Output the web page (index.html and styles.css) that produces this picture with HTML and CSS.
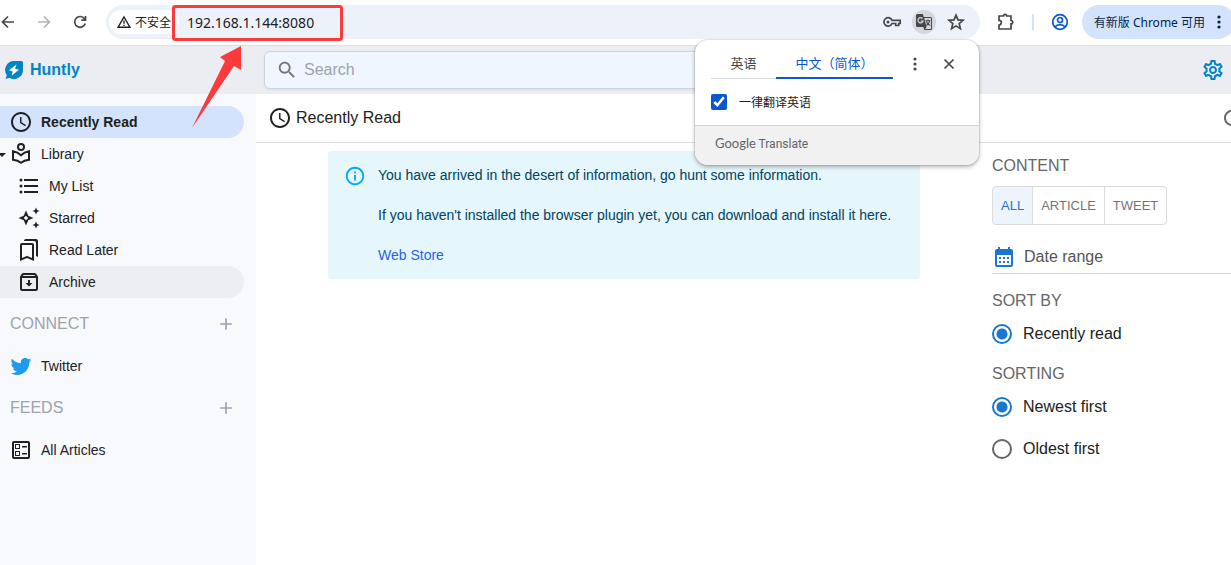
FILE: index.html
```html
<!DOCTYPE html>
<html lang="en">
<head>
    <meta charset="UTF-8">
    <meta name="viewport" content="width=device-width, initial-scale=1.0">
    <title>Huntly</title>
    <link rel="stylesheet" href="styles.css">
</head>
<body>
    <!-- Browser toolbar -->
    <div class="toolbar">
        <div class="nav-buttons">
            <button class="tool" aria-label="Back">
                <svg width="16" height="16" viewBox="0 0 16 16" class="line"><path d="M14 8H3M8 2.500L2.500 8 8 13.500"/></svg>
            </button>
            <button class="tool dim" aria-label="Forward">
                <svg width="16" height="16" viewBox="0 0 16 16" class="line"><path d="M2 8h11M8 2.500L13.500 8 8 13.500"/></svg>
            </button>
            <button class="tool" aria-label="Reload">
                <svg width="16" height="16" viewBox="0 0 16 16" class="line"><path d="M13.300 9.500A5.400 5.400 0 1 1 12.500 4.700L13.500 6M13.500 2v4.200H9.300"/></svg>
            </button>
        </div>
        <div class="omnibox">
            <button class="security">
                <svg width="14" height="14" viewBox="0 0 14 14" class="line thin"><path d="M7 2L13 12.300H1zM7 5.500v3.200M7 9.700v1.300"/></svg>
                <span>不安全</span>
            </button>
            <input class="url" type="text" value="192.168.1.144:8080" aria-label="Address">
            <button class="tool" aria-label="Passwords">
                <svg width="20" height="20" viewBox="0 0 20 20" class="line"><path d="M10 8.300h8.200v3.200h-1.500v2h-3v-2H10a4.200 4.200 0 1 1 0-3.200z"/><circle cx="6" cy="10" r="1.500" fill="currentColor" stroke="none"/></svg>
            </button>
            <button class="tool round" aria-label="Translate">
                <svg width="18" height="18" viewBox="0 0 18 18"><path fill="currentColor" d="M2.500 1h5.300l1 3H15.500A1.500 1.500 0 0 1 17 5.500v10A1.500 1.500 0 0 1 15.500 17H9.300l-1-3H2.500A1.500 1.500 0 0 1 1 12.500v-10A1.500 1.500 0 0 1 2.500 1z"/><path fill="#d4d7dd" d="M9.200 5h6.300l.5.500v10l-.5.500h-5.400l1.500-2z"/><path fill="none" stroke="#d4d7dd" stroke-width="1.200" d="M7.500 5.500A2.600 2.600 0 1 0 8.100 8H5.600"/><path fill="none" stroke="#474747" stroke-width="1.100" d="M10.500 7.800h5M13 6.500v1.300M14.700 7.800c-.5 2.200-1.600 3.600-3.400 4.700M11.400 8.500c.6 1.700 1.700 3 3.600 4"/></svg>
            </button>
            <button class="tool" aria-label="Bookmark this tab">
                <svg width="18" height="18" viewBox="0 0 18 18" class="line"><path d="M9 2.200l2 4.700 5.100.4-3.900 3.300 1.200 5L9 12.900l-4.400 2.700 1.200-5-3.900-3.300 5.100-.4z"/></svg>
            </button>
        </div>
        <div class="browser-actions">
            <button class="tool" aria-label="Extensions">
                <svg width="18" height="18" viewBox="0 0 18 18" class="line"><path d="M2 3h4.500a1.600 1.600 0 0 1 3.200 0H14v4.500a1.700 1.700 0 0 1 0 3.400V16H2v-4a2.300 2.300 0 0 0 0-4.600z"/></svg>
            </button>
            <span class="divider"></span>
            <button class="tool profile" aria-label="Profile">
                <svg width="18" height="18" viewBox="0 0 18 18" class="line"><circle cx="9" cy="9" r="7.300"/><circle cx="9" cy="7" r="2.500"/><path d="M3.800 14c2.800-3.200 7.600-3.200 10.400 0"/></svg>
            </button>
            <button class="update">
                <span>有新版 Chrome 可用</span>
                <svg width="4" height="16" viewBox="0 0 4 16" fill="currentColor"><circle cx="2" cy="3" r="1.600"/><circle cx="2" cy="8" r="1.600"/><circle cx="2" cy="13" r="1.600"/></svg>
            </button>
        </div>
    </div>

    <!-- App header -->
    <header class="header">
        <a class="brand" href="#">
            <svg width="20" height="20" viewBox="0 0 20 20"><path fill="#0284c7" d="M10 1h7.500A1.500 1.500 0 0 1 19 2.500V10a9 9 0 0 1-13.600 7.800L1.500 19l1.300-3.800A9 9 0 0 1 10 1z"/><path fill="#fff" d="M12.500 4.500L5 10.300l3.800 1.200-1.300 4.200 7.500-5.900-4-1.100z"/></svg>
            <span>Huntly</span>
        </a>
        <label class="search">
            <svg width="22" height="22" viewBox="0 0 24 24" fill="currentColor"><path d="M15.500 14h-.79l-.28-.27C15.410 12.590 16 11.110 16 9.500 16 5.910 13.090 3 9.500 3S3 5.910 3 9.500 5.910 16 9.500 16c1.610 0 3.090-.59 4.230-1.570l.27.28v.79l5 4.990L20.490 19l-4.990-5zm-6 0C7.010 14 5 11.990 5 9.500S7.010 5 9.500 5 14 7.010 14 9.500 11.990 14 9.500 14z"/></svg>
            <input type="text" placeholder="Search" aria-label="Search">
        </label>
        <button class="settings" aria-label="Settings">
            <svg width="24" height="24" viewBox="0 0 24 24" fill="currentColor"><path d="M19.430 12.980c.04-.32.07-.64.07-.98 0-.34-.03-.66-.07-.98l2.110-1.650c.19-.15.24-.42.12-.64l-2-3.460c-.09-.16-.26-.25-.44-.25-.06 0-.12.010-.17.030l-2.490 1c-.52-.4-1.080-.73-1.690-.98l-.38-2.650C14.460 2.180 14.250 2 14 2h-4c-.25 0-.46.18-.49.42l-.38 2.650c-.61.25-1.170.59-1.690.98l-2.490-1c-.06-.02-.12-.03-.18-.03-.17 0-.34.09-.43.25l-2 3.460c-.13.22-.07.49.12.64l2.110 1.650c-.04.32-.07.65-.07.98 0 .33.03.66.07.98l-2.110 1.650c-.19.15-.24.42-.12.64l2 3.460c.09.16.26.25.44.25.06 0 .12-.01.17-.03l2.490-1c.52.4 1.080.73 1.690.98l.38 2.650c.03.24.24.42.49.42h4c.25 0 .46-.18.49-.42l.38-2.650c.61-.25 1.170-.59 1.690-.98l2.490 1c.06.02.12.03.18.03.17 0 .34-.09.43-.25l2-3.460c.12-.22.07-.49-.12-.64l-2.110-1.650zm-1.980-1.710c.04.31.05.52.05.73 0 .21-.02.43-.05.73l-.14 1.130.89.7 1.080.84-.7 1.210-1.270-.51-1.040-.42-.9.68c-.43.32-.84.56-1.250.73l-1.060.43-.16 1.130-.2 1.350h-1.400l-.19-1.350-.16-1.130-1.060-.43c-.43-.18-.83-.41-1.230-.71l-.91-.7-1.060.43-1.270.51-.7-1.210 1.080-.84.89-.7-.14-1.130c-.03-.31-.05-.54-.05-.74s.02-.43.05-.73l.14-1.130-.89-.7-1.080-.84.7-1.210 1.270.51 1.040.42.9-.68c.43-.32.84-.56 1.250-.73l1.060-.43.16-1.130.2-1.350h1.390l.19 1.350.16 1.130 1.060.43c.43.18.83.41 1.230.71l.91.7 1.060-.43 1.270-.51.7 1.210-1.070.85-.89.7.14 1.130zM12 8c-2.210 0-4 1.790-4 4s1.790 4 4 4 4-1.790 4-4-1.790-4-4-4zm0 6c-1.100 0-2-.9-2-2s.9-2 2-2 2 .9 2 2-.9 2-2 2z"/></svg>
        </button>
    </header>

    <div class="app">
        <nav class="sidebar">
            <a class="item selected" href="#">
                <svg width="24" height="24" viewBox="0 0 24 24"><path d="M11.990 2C6.470 2 2 6.480 2 12s4.470 10 9.990 10C17.520 22 22 17.520 22 12S17.520 2 11.990 2zM12 20c-4.420 0-8-3.580-8-8s3.580-8 8-8 8 3.580 8 8-3.580 8-8 8zM12.500 7H11v6l5.250 3.150.75-1.230-4.500-2.670z"/></svg>
                Recently Read
            </a>
            <a class="item library" href="#">
                <svg width="24" height="24" viewBox="0 0 24 24"><path fill="none" stroke="#212121" stroke-width="2" d="M12 2a3 3 0 1 1 0 6 3 3 0 0 1 0-6zM4 9.300c3 .5 5.800 1.800 8 4 2.200-2.200 5-3.500 8-4v8.500c-3 .3-5.800 1.200-8 3-2.200-1.800-5-2.700-8-3z"/></svg>
                Library
            </a>
            <a class="item child" href="#">
                <svg width="24" height="24" viewBox="0 0 24 24"><circle cx="4" cy="6" r="1.500"/><circle cx="4" cy="12" r="1.500"/><circle cx="4" cy="18" r="1.500"/><path d="M7 5h14v2H7zM7 11h14v2H7zM7 17h14v2H7z"/></svg>
                My List
            </a>
            <a class="item child" href="#">
                <svg width="24" height="24" viewBox="0 0 24 24"><path d="M19 8.500l1.100-2.400L22.500 5l-2.400-1.100L19 1.500l-1.100 2.400L15.500 5l2.400 1.100zM19 15.500l-1.100 2.400-2.400 1.100 2.400 1.100 1.100 2.400 1.100-2.400 2.400-1.100-2.400-1.100zM11.300 9.700L9 4.500 6.700 9.700 1.500 12l5.200 2.300L9 19.500l2.300-5.200 5.200-2.300zM9 14.300L6.700 12 9 9.700l2.300 2.300z"/></svg>
                Starred
            </a>
            <a class="item child" href="#">
                <svg width="24" height="24" viewBox="0 0 24 24"><path d="M15 7v12.970l-4.210-1.810-.79-.34-.79.34L5 19.970V7h10m4-6H8.990C7.890 1 7 1.900 7 3h10c1.100 0 2 .9 2 2v13l2 1V3c0-1.100-.9-2-2-2zm-4 4H5c-1.100 0-2 .9-2 2v16l7-3 7 3V7c0-1.100-.9-2-2-2z"/></svg>
                Read Later
            </a>
            <a class="item child hovered" href="#">
                <svg width="24" height="24" viewBox="0 0 24 24"><path fill="none" stroke="#212121" stroke-width="2" d="M4 7v11.500A1.500 1.500 0 0 0 5.500 20h13a1.500 1.500 0 0 0 1.500-1.500V7l-1.500-2.500L17.500 4h-11l-1 .5zM4 7h16"/><path d="M11 10h2v3h2.500L12 16.500 8.500 13H11z"/></svg>
                Archive
            </a>
            <div class="group">
                <h2>CONNECT</h2>
                <button aria-label="Add connection"><svg width="20" height="20" viewBox="0 0 24 24"><path d="M19 13h-6v6h-2v-6H5v-2h6V5h2v6h6z"/></svg></button>
            </div>
            <a class="item twitter" href="#">
                <svg width="24" height="24" viewBox="0 0 24 24"><path d="M22.460 6c-.77.35-1.600.58-2.460.69.88-.53 1.560-1.370 1.880-2.380-.83.5-1.750.85-2.720 1.050C18.370 4.500 17.260 4 16 4c-2.350 0-4.270 1.920-4.270 4.290 0 .34.04.67.11.98C8.280 9.090 5.110 7.380 3 4.790c-.37.63-.58 1.370-.58 2.150 0 1.490.75 2.810 1.910 3.560-.71 0-1.370-.2-1.950-.5v.03c0 2.080 1.480 3.820 3.440 4.210a4.220 4.220 0 0 1-1.930.07 4.280 4.280 0 0 0 4 2.980 8.521 8.521 0 0 1-5.330 1.840c-.34 0-.68-.02-1.020-.06C3.440 20.290 5.700 21 8.120 21 16 21 20.330 14.460 20.330 8.790c0-.19 0-.37-.01-.56.84-.6 1.560-1.360 2.140-2.230z"/></svg>
                Twitter
            </a>
            <div class="group">
                <h2>FEEDS</h2>
                <button aria-label="Add feed"><svg width="20" height="20" viewBox="0 0 24 24"><path d="M19 13h-6v6h-2v-6H5v-2h6V5h2v6h6z"/></svg></button>
            </div>
            <a class="item" href="#">
                <svg width="24" height="24" viewBox="0 0 24 24"><path fill-rule="evenodd" d="M5 3h14a2 2 0 0 1 2 2v14a2 2 0 0 1-2 2H5a2 2 0 0 1-2-2V5a2 2 0 0 1 2-2zm0 2v14h14V5zM6 6h5v5H6zm1 1v3h3V7zM6 13h5v5H6zm1 1v3h3v-3zM13 8h5v1.500h-5zM13 15h5v1.500h-5z"/></svg>
                All Articles
            </a>
        </nav>

        <main class="main">
            <div class="page-bar">
                <svg width="24" height="24" viewBox="0 0 24 24"><path d="M11.990 2C6.470 2 2 6.480 2 12s4.470 10 9.990 10C17.520 22 22 17.520 22 12S17.520 2 11.990 2zM12 20c-4.420 0-8-3.580-8-8s3.580-8 8-8 8 3.580 8 8-3.580 8-8 8zM12.500 7H11v6l5.250 3.150.75-1.230-4.500-2.670z"/></svg>
                <h1>Recently Read</h1>
                <button class="refresh" aria-label="Refresh">
                    <svg width="24" height="24" viewBox="0 0 24 24"><path d="M17.650 6.350C16.200 4.900 14.210 4 12 4c-4.420 0-7.990 3.580-7.990 8s3.570 8 7.990 8c3.730 0 6.840-2.550 7.730-6h-2.080c-.82 2.330-3.040 4-5.650 4-3.310 0-6-2.690-6-6s2.690-6 6-6c1.660 0 3.140.69 4.220 1.780L13 11h7V4z"/></svg>
                </button>
            </div>
            <div class="columns">
                <section class="content">
                    <div class="alert">
                        <svg width="22" height="22" viewBox="0 0 24 24"><path d="M11 7h2v2h-2zM11 11h2v6h-2zM12 2C6.480 2 2 6.480 2 12s4.480 10 10 10 10-4.480 10-10S17.520 2 12 2zm0 18c-4.410 0-8-3.590-8-8s3.590-8 8-8 8 3.590 8 8-3.590 8-8 8z"/></svg>
                        <div class="message">
                            <p>You have arrived in the desert of information, go hunt some information.</p>
                            <p>If you haven't installed the browser plugin yet, you can download and install it here.</p>
                            <p><a href="#">Web Store</a></p>
                        </div>
                    </div>
                </section>
                <aside class="filters">
                    <h2>CONTENT</h2>
                    <div class="toggle">
                        <button class="active">ALL</button>
                        <button>ARTICLE</button>
                        <button>TWEET</button>
                    </div>
                    <label class="date">
                        <svg width="24" height="24" viewBox="0 0 24 24"><path fill-rule="evenodd" d="M6 2h2v2h8V2h2v2h1a2 2 0 0 1 2 2v14a2 2 0 0 1-2 2H5a2 2 0 0 1-2-2V6a2 2 0 0 1 2-2h1zM5 10v10h14V10zM7 12h2v2H7zM11 12h2v2h-2zM15 12h2v2h-2zM7 16h2v2H7zM11 16h2v2h-2zM15 16h2v2h-2z"/></svg>
                        <input type="text" placeholder="Date range" aria-label="Date range">
                    </label>
                    <h2>SORT BY</h2>
                    <label class="radio"><input type="radio" name="sort" checked>Recently read</label>
                    <h2>SORTING</h2>
                    <label class="radio"><input type="radio" name="order" checked>Newest first</label>
                    <label class="radio"><input type="radio" name="order">Oldest first</label>
                </aside>
            </div>
        </main>
    </div>

    <!-- Translate popup -->
    <div class="popup">
        <div class="popup-top">
            <div class="tabs">
                <button class="tab">英语</button>
                <button class="tab current">中文（简体）</button>
            </div>
            <button class="tool more" aria-label="More options">
                <svg width="4" height="16" viewBox="0 0 4 16" fill="currentColor"><circle cx="2" cy="3" r="1.600"/><circle cx="2" cy="8" r="1.600"/><circle cx="2" cy="13" r="1.600"/></svg>
            </button>
            <button class="tool" aria-label="Close">
                <svg width="12" height="12" viewBox="0 0 12 12" class="line"><path d="M1.500 1.500l9 9M10.500 1.500l-9 9"/></svg>
            </button>
        </div>
        <label class="always"><input type="checkbox" checked>一律翻译英语</label>
        <div class="popup-foot"><span class="google">Google</span> Translate</div>
    </div>

    <!-- Address callout -->
    <svg class="callout" width="180" height="130" viewBox="0 0 180 130"><rect x="5.500" y="6.500" width="168" height="33" rx="2" fill="none" stroke="#fb3b3b" stroke-width="3"/><path fill="#fb3b3b" d="M73 46L52 57l5 4-33 67 42-62 7 4z"/></svg>
</body>
</html>
```
FILE: styles.css
```css
* {
    box-sizing: border-box;
}

body {
    margin: 0;
    min-height: 100vh;
    display: flex;
    flex-direction: column;
    position: relative;
    overflow: hidden;
    background: #fff;
    color: #212121;
    font-family: "Liberation Sans", Arial, "Noto Sans CJK SC", sans-serif;
    font-size: 14px;
}

button,
input {
    font: inherit;
    color: inherit;
}

button {
    padding: 0;
    border: none;
    background: none;
    cursor: pointer;
}

h1,
h2,
p {
    margin: 0;
    font-weight: normal;
}

a {
    color: inherit;
    text-decoration: none;
}

svg {
    display: block;
    flex-shrink: 0;
}

.line {
    fill: none;
    stroke: currentColor;
    stroke-width: 1.7;
}

.thin {
    stroke-width: 1.4;
}

/* Browser toolbar */
.toolbar {
    display: flex;
    align-items: center;
    height: 46px;
    padding-bottom: 1px;
    border-bottom: 1px solid #dfe0e3;
    font-family: "Noto Sans", "Noto Sans CJK SC", sans-serif;
}

.tool {
    display: flex;
    align-items: center;
    justify-content: center;
    width: 24px;
    height: 24px;
    color: #474747;
}

.tool.dim {
    color: #b5b5b5;
}

.tool.round {
    border-radius: 50%;
    background: #d4d7dd;
}

.tool.profile {
    color: #0b57d0;
}

.nav-buttons {
    display: flex;
    gap: 12px;
    margin-left: -4px;
}

.omnibox {
    flex: 1;
    display: flex;
    align-items: center;
    gap: 8px;
    height: 34px;
    margin-left: 14px;
    padding: 0 12px 0 3px;
    border-radius: 17px;
    background: #edf1fa;
}

.security {
    display: flex;
    align-items: center;
    gap: 4px;
    height: 24px;
    padding: 0 8px;
    border-radius: 12px;
    background: #fff;
    font-size: 12px;
    white-space: nowrap;
}

.url {
    flex: 1;
    min-width: 0;
    padding: 0;
    border: none;
    outline: none;
    background: none;
}

.browser-actions {
    display: flex;
    align-items: center;
    gap: 14px;
    margin: 0 -4px 0 14px;
}

.divider {
    width: 2px;
    height: 16px;
    background: #d3e3fd;
}

.update {
    display: flex;
    align-items: center;
    gap: 12px;
    height: 34px;
    margin-left: -4px;
    padding: 0 14px 0 12px;
    border-radius: 17px;
    background: #d3e3fd;
    color: #041e49;
    font-size: 12px;
    white-space: nowrap;
}

/* App header */
.header {
    display: flex;
    align-items: center;
    height: 48px;
    padding-right: 6px;
    background: #ecedf3;
}

.brand {
    display: flex;
    align-items: center;
    gap: 6px;
    width: 264px;
    padding-left: 4px;
    color: #0284c7;
    font-size: 16px;
    font-weight: bold;
}

.search {
    flex: 1;
    display: flex;
    align-items: center;
    gap: 6px;
    max-width: 700px;
    height: 38px;
    padding: 0 11px;
    border: 1px solid #cbd5e1;
    border-radius: 6px;
    background: #eff6ff;
    box-shadow: 0 1px 2px rgba(0, 0, 0, 0.08);
    color: #757575;
}

.search input {
    flex: 1;
    min-width: 0;
    padding: 0;
    border: none;
    outline: none;
    background: none;
    font-size: 16px;
}

.search input::placeholder {
    color: #9ca3af;
}

.settings {
    margin-left: auto;
    color: #0284c7;
}

/* Sidebar */
.app {
    flex: 1;
    display: flex;
}

.sidebar {
    flex: 0 0 256px;
    padding: 12px 12px 12px 0;
    background: #f7f9fd;
}

.item {
    position: relative;
    display: flex;
    align-items: center;
    gap: 8px;
    height: 32px;
    padding-left: 9px;
    border-radius: 0 16px 16px 0;
}

.item svg,
.page-bar svg {
    fill: #212121;
}

.item.child {
    padding-left: 17px;
}

.item.selected {
    background: #d3e3fd;
    font-weight: bold;
}

.item.hovered {
    background: #edeef1;
}

.item.library::before {
    content: "";
    position: absolute;
    left: -2px;
    top: 15px;
    border: 4px solid transparent;
    border-top-color: #212121;
    border-bottom: none;
}

.item.twitter svg {
    fill: #1d9bf0;
}

.group {
    display: flex;
    align-items: center;
    justify-content: space-between;
    height: 52px;
    padding: 0 8px 0 10px;
    color: #9ca3af;
}

.group h2,
.filters h2 {
    font-size: 16px;
}

.group svg {
    fill: #9ca3af;
}

/* Main area */
.main {
    flex: 1;
    min-width: 0;
}

.page-bar {
    display: flex;
    align-items: center;
    gap: 4px;
    height: 49px;
    padding-left: 12px;
    border-bottom: 1px solid #e0e0e0;
}

.page-bar h1 {
    font-size: 16px;
}

.refresh {
    margin: 0 -13px 0 auto;
}

.page-bar .refresh svg {
    fill: #666;
}

.columns {
    display: flex;
}

.content {
    flex: 1;
    padding: 8px 72px;
}

.alert {
    display: flex;
    gap: 12px;
    padding: 14px 16px;
    border-radius: 4px;
    background: #e5f6fd;
    color: #014361;
    line-height: 20px;
}

.alert svg {
    fill: #03a9f4;
}

.message {
    display: grid;
    gap: 20px;
}

.message a {
    color: #2563eb;
}

/* Filters */
.filters {
    width: 239px;
    padding-top: 11px;
    color: #212121;
    font-size: 16px;
}

.filters h2 {
    color: #666;
    line-height: 24px;
}

.toggle {
    display: flex;
    margin: 8px 0 16px;
    font-size: 13px;
}

.toggle button {
    height: 39px;
    margin-left: -1px;
    padding: 0 8px;
    border: 1px solid #dcdcdc;
    color: #757575;
}

.toggle button:first-child {
    margin-left: 0;
    border-radius: 4px 0 0 4px;
}

.toggle button:last-child {
    border-radius: 0 4px 4px 0;
}

.toggle .active {
    background: #edf4fb;
    color: #1976d2;
}

.date {
    display: flex;
    align-items: center;
    gap: 8px;
    height: 33px;
    margin-bottom: 15px;
    border-bottom: 1px solid #d5d5d5;
}

.date svg {
    fill: #1976d2;
}

.date input {
    flex: 1;
    min-width: 0;
    padding: 0;
    border: none;
    outline: none;
    background: none;
}

.date input::placeholder {
    color: #555;
}

.radio {
    display: flex;
    align-items: center;
    gap: 11px;
    height: 42px;
}

.radio + h2 {
    margin-top: 7px;
}

.radio input {
    appearance: none;
    width: 20px;
    height: 20px;
    margin: 0;
    border: 2px solid #666;
    border-radius: 50%;
}

.radio input:checked {
    border-color: #1976d2;
    background: radial-gradient(circle, #1976d2 5px, transparent 6px);
}

/* Translate popup */
.popup {
    position: absolute;
    top: 40px;
    right: 252px;
    width: 284px;
    overflow: hidden;
    border-radius: 13px;
    background: #fff;
    box-shadow: 0 0 0 1px rgba(0, 0, 0, 0.08), 0 2px 4px rgba(0, 0, 0, 0.3);
    font-family: "Noto Sans", "Noto Sans CJK SC", sans-serif;
}

.popup-top {
    display: flex;
    align-items: center;
    gap: 10px;
    padding: 8px 18px 0 16px;
}

.tabs {
    flex: 1;
    display: flex;
}

.tab {
    flex: 1 0 auto;
    height: 31px;
    padding: 0 19px;
    border-bottom: 1px solid #dadce0;
    font-size: 13px;
    line-height: 20px;
    color: #474747;
}

.tab.current {
    border-bottom: 2px solid #0b57d0;
    color: #0b57d0;
}

.always {
    display: flex;
    align-items: center;
    gap: 12px;
    height: 46px;
    padding: 0 16px;
    font-size: 12px;
}

.always input {
    width: 16px;
    height: 16px;
    margin: 0;
    accent-color: #0b57d0;
}

.popup-foot {
    height: 40px;
    padding: 8px 20px;
    border-top: 1px solid #d5d5d5;
    background: #f1f1f1;
    color: #5f6368;
    font-family: Roboto, sans-serif;
    font-size: 12px;
    line-height: 18px;
}

.google {
    font-family: Lato, sans-serif;
    font-size: 13px;
}

/* Address callout */
.callout {
    position: absolute;
    top: 0;
    left: 168px;
    pointer-events: none;
}
```
